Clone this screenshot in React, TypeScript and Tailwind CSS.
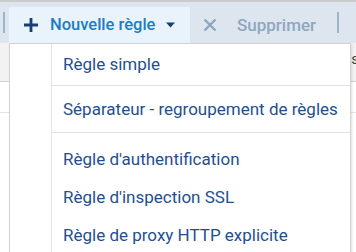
import React from "react";

export default function App() {
  const font = { fontFamily: "Roboto, 'Noto Sans', sans-serif" };
  return (
    <div className="relative w-[356px] h-[252px] overflow-hidden bg-white" style={font}>
      <div className="h-[2px] bg-[#cbcbcb]" />
      <div className="h-[41px] bg-[#dde6ef] flex items-end">
        <div className="ml-[3px] w-[2px] h-[21px] bg-[#9fb4ca] self-center" />
        <button className="ml-[4px] h-[36px] w-[181px] bg-[#e8f3fc] flex items-center pl-[14px] shrink-0">
          <svg width="16" height="16" viewBox="0 0 16 16" className="mr-[11px] shrink-0">
            <path d="M8 1v14M1 8h14" stroke="#173f73" strokeWidth="2.8" />
          </svg>
          <span className="text-[16.5px] leading-none font-medium text-[#1c7dc2] whitespace-nowrap">Nouvelle règle</span>
          <svg width="9" height="6" viewBox="0 0 9 6" className="ml-[11px] shrink-0">
            <path d="M0 0.5h9L4.5 5.5z" fill="#173f73" />
          </svg>
        </button>
        <div className="ml-[13px] h-[36px] flex items-center shrink-0">
          <svg width="14" height="14" viewBox="0 0 14 14" className="mr-[20px] shrink-0">
            <path d="M1.5 1.5l11 11M12.5 1.5l-11 11" stroke="#8fa4bd" strokeWidth="2.4" />
          </svg>
          <span className="text-[17px] leading-none font-medium text-[#90a6bf] whitespace-nowrap">Supprimer</span>
        </div>
        <div className="ml-[21px] w-[2px] h-[21px] bg-[#9fb4ca] self-center shrink-0" />
      </div>
      <div className="h-[39px] bg-[#f2f2f2] border-b border-[#d2d2d2] flex justify-end items-start pt-[9px]">
        <span className="text-[15px] leading-none text-[#444] mr-[-3px]">s</span>
      </div>
      <div className="h-[31px] border-b border-[#e6e6e6]" />

      <div className="absolute left-[9px] top-[43px] w-[342px] h-[215px] bg-white border border-[#d3d3d3] shadow-[1px_1px_2px_rgba(0,0,0,0.12)]">
        <div className="flex h-full">
          <div className="w-[42px] border-r border-[#e3e3e3]" />
          <div className="flex-1 text-[17px] leading-none text-[#1f4f8f] whitespace-nowrap">
            <div className="h-[42px] flex items-center pl-[11px] border-b border-[#e3e3e3]">Règle simple</div>
            <div className="h-[47px] flex items-center pl-[11px] border-b border-[#e3e3e3]">Séparateur - regroupement de règles</div>
            <div className="pt-[7px]">
              <div className="h-[38px] flex items-center pl-[11px]">Règle d'authentification</div>
              <div className="h-[38px] flex items-center pl-[11px]">Règle d'inspection SSL</div>
              <div className="h-[38px] flex items-center pl-[11px]">Règle de proxy HTTP explicite</div>
            </div>
          </div>
        </div>
      </div>
    </div>
  );
}
